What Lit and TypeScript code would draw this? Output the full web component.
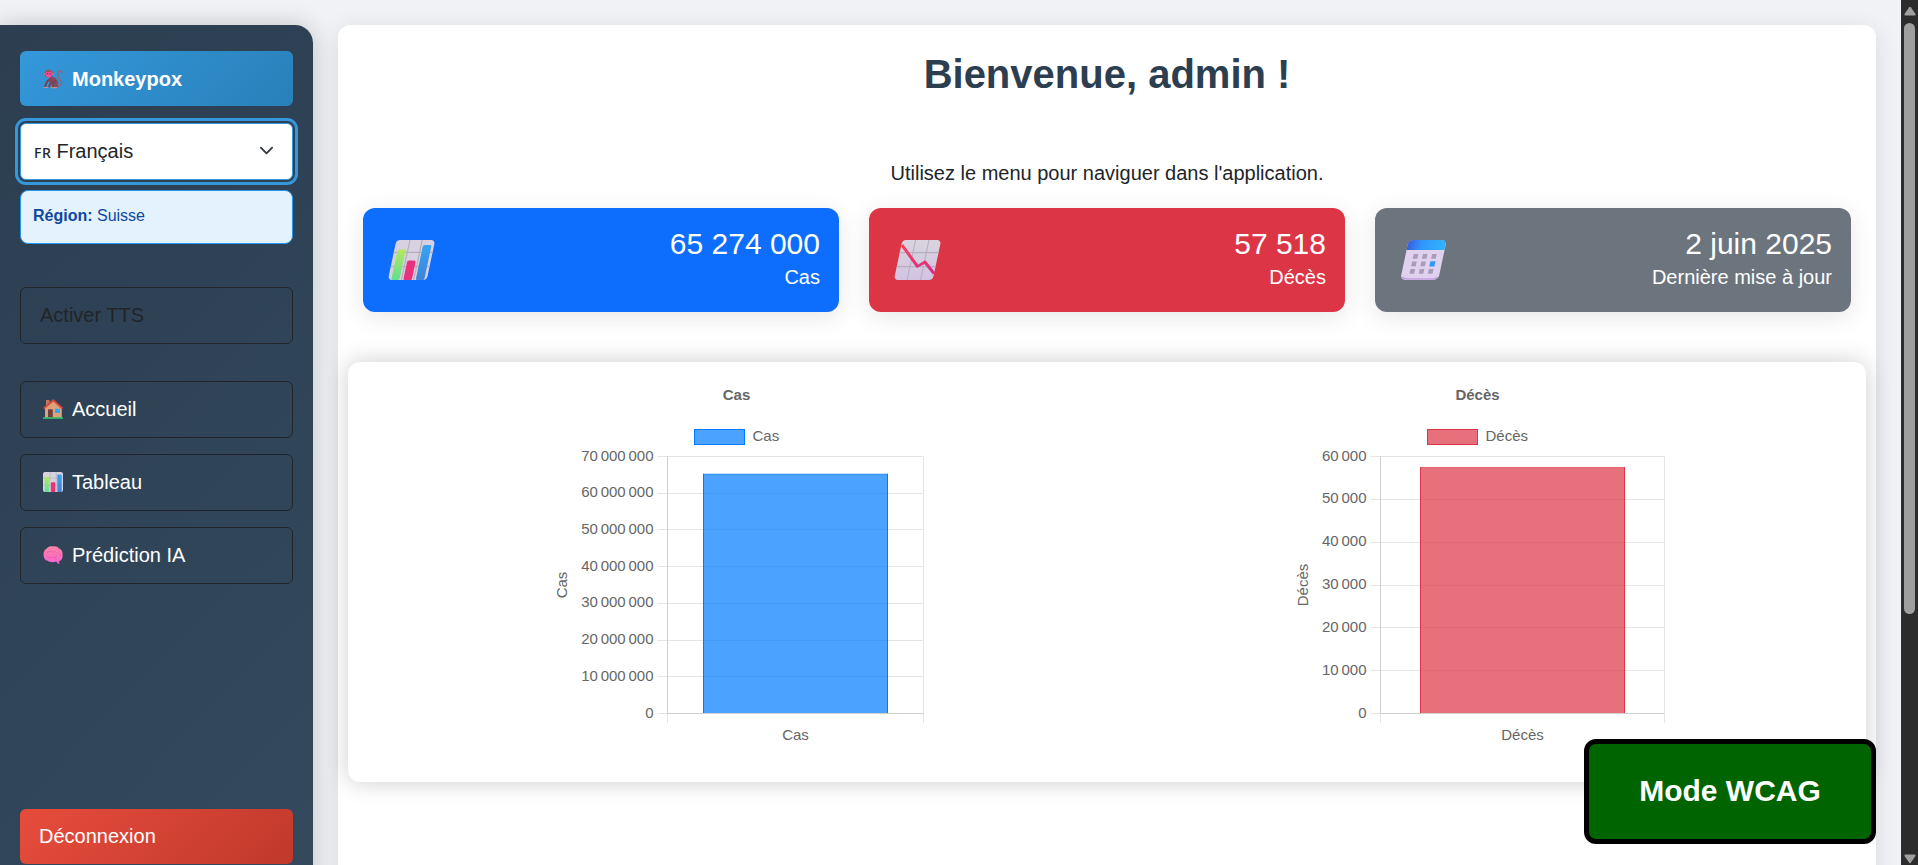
import { LitElement, html, css, svg } from "lit";
import { customElement, property } from "lit/decorators.js";

const monkey = html`<svg class="ico" viewBox="0 0 20 20">
  <path d="M14 17.300c3 .2 5-2 4.500-4.300-.5-2.200-2.800-3.200-3.600-5.600-.8-2.700.6-5.400 2.500-5.400 1.200 0 1.600.9 1.300 1.900" fill="none" stroke="#a0606a" stroke-width="1.400" stroke-linecap="round"/>
  <path d="M6.500 8.500c2-1.500 5-.8 6.800 1.500 1.700 2.200 2.200 4.500 1.700 6.300-.4 1.500-1.500 2.400-3 2.400H9.500c-1-1.500-.8-3 .2-4.200L6 13z" fill="#84495a"/>
  <path d="M7.500 9.500 4.300 12.200 1.800 17.800M9.300 11.500 7.300 15 5.800 18" fill="none" stroke="#7a4052" stroke-width="2" stroke-linejoin="round"/>
  <path d="M13 11.500c-2.500.8-3.700 3.500-3 6" fill="none" stroke="#663648" stroke-width=".8"/>
  <path d="M.9 18.500h4M8.200 18.600h5.500" stroke="#c98a88" stroke-width="1.200" stroke-linecap="round"/>
  <circle cx="5.800" cy="4.600" r="4.200" fill="#9c5458"/>
  <circle cx="1.800" cy="4.800" r="1.100" fill="#c0726a"/><circle cx="9.800" cy="4.800" r="1.100" fill="#c0726a"/>
  <path d="M2.900 4.200c0-1.600 2-1.900 2.900-.9.900-1 2.900-.7 2.900.9 0 2.600-.9 4.500-2.900 4.500s-2.900-1.900-2.900-4.500z" fill="#f04f9c"/>
  <circle cx="4.600" cy="4.600" r=".6" fill="#45213a"/><circle cx="7" cy="4.600" r=".6" fill="#45213a"/>
</svg>`;

const house = html`<svg class="ico" viewBox="0 0 20 20">
  <path d="M3 1h3.500v6H3z" fill="#b97d5d"/>
  <path d="M2 8.500 10.500 2l8.300 7v9.800H2z" fill="#dca27a"/>
  <path d="M.8 9.500 10.200 1.300 19.500 9.500" fill="none" stroke="#e0463c" stroke-width="1.800"/>
  <path d="M5 10.300h4.800v8.500H5z" fill="#6d3f3d"/>
  <path d="M12 9.800h4.800v4.200H12z" fill="#28a8f5"/>
  <path d="M0 18.200h20v1.600H0z" fill="#35c46a"/>
</svg>`;

const bars = svg`
  <rect width="20" height="20" rx="2" fill="#d8d2e0"/>
  <path d="M7 0v20M13.300 0v20M0 6.200h20M0 13.300h20" stroke="#b3adbc" stroke-width=".6"/>
  <rect x="1.700" y="4.700" width="4.200" height="15.300" rx=".8" fill="url(#g)"/>
  <rect x="7.900" y="10.300" width="4.400" height="9.700" rx=".8" fill="#e8327c"/>
  <rect x="14.300" y="2.500" width="4.400" height="17.500" rx=".8" fill="url(#b)"/>`;
const defs = svg`<defs>
  <linearGradient id="g" x2="0" y2="1"><stop stop-color="#b3e85b"/><stop offset="1" stop-color="#5fdf92"/></linearGradient>
  <linearGradient id="b" x2="0" y2="1"><stop stop-color="#35a5f3"/><stop offset="1" stop-color="#3f83d8"/></linearGradient>
  <linearGradient id="p" x2="0" y2="1"><stop stop-color="#d9d4de"/><stop offset="1" stop-color="#d3c3e3"/></linearGradient>
  <linearGradient id="c"><stop stop-color="#3a5be0"/><stop offset=".35" stop-color="#2f95fb"/><stop offset="1" stop-color="#35b4ff"/></linearGradient>
  <linearGradient id="r" x2="0" y2="1"><stop stop-color="#f6435c"/><stop offset="1" stop-color="#dd2a86"/></linearGradient>
</defs>`;
const chartIcon = html`<svg class="ico" viewBox="0 0 20 20">${defs}${bars}</svg>`;

const brain = html`<svg class="ico" viewBox="0 0 20 20">
  <defs><linearGradient id="m" x2="0" y2="1"><stop stop-color="#fb84a6"/><stop offset="1" stop-color="#fb63d6"/></linearGradient></defs>
  <path d="M.6 10C.2 7 1.800 4.300 4 3.300c1.500-1.800 4-2.300 6-1.800 2.300-.5 4.800.2 6 2 2.600 1 3.900 3.600 3.500 6 .6 3.400-.8 5.900-3.400 6.600l.3 2.600c-1 .3-1.900-.2-2.500-1.500l-.6-.7c-2.800.9-6.600 1.100-9-.9C2.200 15.400.5 12.800.6 10z" fill="url(#m)"/>
  <path d="M4 8.200c1.500-2.700 4-2.200 5.200-1 1.500-1 3.800-.8 4.500.5M4.500 11.700c3 1.500 7.500 1.200 9.500-1.200M13.500 15c-1-1-1-1.900-.4-2.900M16.500 8.200c1 .9 1.200 2.300.5 3.300" fill="none" stroke="#e8589a" stroke-width=".7" stroke-linecap="round"/>
</svg>`;

const bigBars = html`<svg class="big" viewBox="0 0 47 40">${defs}<g transform="translate(8.400 0) skewX(-12) scale(1.940 2)">${bars}</g></svg>`;
const bigDown = html`<svg class="big" viewBox="0 0 47 40">${defs}<g transform="translate(8.400 0) skewX(-12) scale(1.940 2)">
  <rect width="20" height="20" rx="2" fill="url(#p)"/>
  <path d="M6.800 0v20M13.700 0v20M0 6.300h20M0 13.300h20" stroke="#b5b0bd" stroke-width=".55"/>
  <path d="M.3 2.500 10.700 13.200 14 11 20 16.800" fill="none" stroke="url(#r)" stroke-width="1.400" stroke-linejoin="round"/></g></svg>`;
const bigCal = html`<svg class="big" viewBox="0 0 47 40">${defs}<g transform="translate(8.700 0) skewX(-12)">
  <rect width="38" height="40" rx="5" fill="#e0d2ee"/>
  <path d="M1.500 37q2 2 5 2h25.500q3 0 5-2" fill="none" stroke="#c3a0df" stroke-width="1.500"/>
  <path d="M0 10V5q0-5 5-5h28q5 0 5 5v5z" fill="url(#c)"/>
  <g fill="#a79db8"><path d="M8 14h4.600v4.800H8zM17.200 14h4.600v4.800h-4.600zM26.400 14h4.600v4.800h-4.600zM8 21.500h4.600v4.800H8zM17.200 21.500h4.600v4.800h-4.600zM8 29h4.600v4.800H8zM17.200 29h4.600v4.800h-4.600zM26.400 29h4.600v4.800h-4.600z"/></g>
  <path d="M26.200 21.200h5.100v5.300h-5.100z" fill="#2e97f8"/></g></svg>`;

@customElement("bar-chart")
export class BarChart extends LitElement {
  @property() label = "";
  @property({ type: Number }) value = 0;
  @property({ type: Number }) max = 1;
  @property({ type: Number }) step = 1;
  @property() color = "#000";
  @property() fill = "#000";
  @property({ type: Array }) box: number[] = [];

  static styles = css`
    :host { display: block; }
    svg { display: block; width: 100%; height: 100%; }
    text { font: 15px "Liberation Sans", Arial, sans-serif; fill: #666; }
    .tick { text-anchor: end; word-spacing: -1.350px; }
    .mid { text-anchor: middle; }
    .bold { font-weight: bold; }
  `;

  render() {
    // box: plot left, plot right, bar left, bar right, title centre, legend left, axis title x
    const [l, r, bl, br, tc, lg, ax] = this.box;
    const top = 86.5, bottom = 343.500;
    const y = (v: number) => bottom - (v / this.max) * (bottom - top);
    const ticks: number[] = [];
    for (let v = 0; v <= this.max; v += this.step) ticks.push(v);
    const by = y(this.value);
    const snap = (n: number) => Math.floor(n) + 0.5;
    return html`<svg viewBox="0 0 420 390">
      <text class="mid bold" x=${tc} y="30">${this.label}</text>
      <rect x=${lg} y="59.500" width="50" height="15" fill=${this.fill} stroke=${this.color}></rect>
      <text x=${lg + 58} y="71">${this.label}</text>
      ${ticks.map((v) => svg`
        <path d="M${l - 10} ${snap(y(v))}H${r}" stroke="#e5e5e5"></path>
        <text class="tick" x=${l - 14} y=${Math.round(y(v)) + 4}>${String(v).replace(/\B(?=(\d{3})+$)/g, " ")}</text>`)}
      <path d="M${r} ${top}V353M${l} ${bottom}V353" stroke="#e5e5e5"></path>
      <path d="M${l} ${top}V${bottom}H${r}" fill="none" stroke="#cfcfcf"></path>
      <rect x=${bl} y=${by} width=${br - bl} height=${bottom - by - 0.5} fill=${this.fill}></rect>
      <path d="M${bl + 0.5} ${bottom - 0.5}V${by}M${br - 0.5} ${bottom - 0.5}V${by}" stroke=${this.color} stroke-width="1"></path>
      <path d="M${bl} ${by + 0.3}H${br}" stroke=${this.color} stroke-opacity=".4"></path>
      <text class="mid" x=${(l + r) / 2} y="370">${this.label}</text>
      <text class="mid" transform="translate(${ax} 215) rotate(-90)">${this.label}</text>
    </svg>`;
  }
}

@customElement("app-root")
export class AppRoot extends LitElement {
  static styles = css`
    :host { display: flex; height: 865px; width: 1918px; overflow: hidden; background: #f0f2f5;
      font: 20px/30px "Liberation Sans", Arial, sans-serif; color: #212529; position: relative; }
    * { box-sizing: border-box; }
    .page { display: flex; flex: 1; min-width: 0; padding: 25px 25px 0 0; gap: 25px; }
    .side { width: 313px; height: 870px; flex: none; padding: 26px 20px 0; border-radius: 0 18px 0 0;
      background: linear-gradient(135deg, #2c3e50, #34495e); box-shadow: 0 0 25px rgba(0,0,0,.2);
      display: flex; flex-direction: column; }
    .brand, .out { height: 55px; border-radius: 6px; color: #fff; display: flex; align-items: center; flex: none; }
    .brand { background: linear-gradient(135deg, #3498db, #2980b9); font-weight: bold; padding-left: 23px; gap: 9px; }
    .out { background: linear-gradient(135deg, #e74c3c, #c0392b); padding: 0 0 1px 19px; margin-top: 225px; }
    .ico { width: 20px; height: 20px; flex: none; display: block; }
    .select { margin-top: 17px; height: 57px; background: #fff; border: 1px solid #3498db; border-radius: 6px;
      outline: 3px solid #3498db; outline-offset: 2px; display: flex; align-items: center; padding: 0 18px 2px 13px; }
    .cc { font: 500 14px/30px "Noto Sans", sans-serif; letter-spacing: .6px; margin-right: 5px; padding-top: 4px; }
    .lang { flex: 1; }
    .chev { width: 15px; height: 15px; }
    .region { margin-top: 10px; height: 54px; border: 1px solid #2196f3; border-radius: 8px; background: #e3f2fd;
      color: #0d47a1; font-size: 16px; padding: 10px 12px; }
    .btn { height: 57px; border: 1px solid #212529; border-radius: 6px; display: flex; align-items: center;
      flex: none; padding-bottom: 2px; }
    .tts { margin-top: 43px; padding-left: 19px; }
    nav { margin-top: 37px; display: flex; flex-direction: column; gap: 16px; }
    nav .btn { color: #fff; padding-left: 22px; gap: 9px; }
    .main { flex: 1; height: 870px; background: #fff; border-radius: 12px 12px 0 0; padding: 20px 10px 0;
      box-shadow: 0 5px 25px rgba(0,0,0,.1); }
    h1 { margin: 5px 0 0; font-size: 40px; line-height: 48px; text-align: center; color: #2c3e50; }
    .intro { margin: 60px 0 20px; text-align: center; }
    .cards { display: grid; grid-template-columns: repeat(3, 1fr); gap: 30px; padding: 0 15px; }
    .card { height: 104px; border-radius: 12px; color: #fff; display: flex; justify-content: space-between;
      padding: 18px 19px 0 25px; box-shadow: 0 5px 25px rgba(0,0,0,.1); text-align: right; }
    .blue { background: #0d6efd; } .red { background: #dc3545; } .grey { background: #6c757d; }
    .big { width: 47px; height: 40px; margin-top: 14px; display: block; }
    .num { font-size: 30px; line-height: 36px; }
    .lab { line-height: 30px; }
    .charts { margin-top: 50px; height: 420px; border-radius: 12px; background: #fff; box-shadow: 0 0 25px rgba(0,0,0,.2);
      display: flex; }
    .c1 { width: 420px; height: 390px; margin-left: 192px; margin-top: 8px; }
    .c2 { width: 420px; height: 390px; margin-left: 310px; margin-top: 8px; }
    .wcag { position: absolute; left: 1584px; top: 739px; width: 292px; height: 105px; background: #006400;
      border: 5px solid #000; border-radius: 12px; color: #fff; font-weight: bold; font-size: 30px;
      display: flex; align-items: center; justify-content: center; padding-bottom: 1px; }
    .bar { width: 17px; background: #2c2c2c; flex: none; display: flex; flex-direction: column; align-items: center; padding-top: 6px; }
    .thumb { width: 11px; height: 591px; border-radius: 6px; background: #9f9f9f; margin-top: 7px; }
    .arrow { width: 14px; height: 10px; display: block; }
    .down { margin: auto 0 1px; transform: rotate(180deg); }
  `;

  render() {
    const arrow = svg`<path d="M6.200 1.200q.8-1 1.600 0L12.500 8q.5 1.500-1 1.500h-9Q1 9.500 1.500 8z" fill="#9f9f9f"/>`;
    return html`
      <div class="page">
        <aside class="side">
          <div class="brand">${monkey}<span>Monkeypox</span></div>
          <div class="select">
            <span class="cc">FR</span><span class="lang">Français</span>
            <svg class="chev" viewBox="0 0 16 16"><path d="m2 5 6 6 6-6" fill="none" stroke="#343a40" stroke-width="2" stroke-linecap="round" stroke-linejoin="round"/></svg>
          </div>
          <div class="region"><b>Région:</b> Suisse</div>
          <div class="btn tts">Activer TTS</div>
          <nav>
            <div class="btn">${house}<span>Accueil</span></div>
            <div class="btn">${chartIcon}<span>Tableau</span></div>
            <div class="btn">${brain}<span>Prédiction IA</span></div>
          </nav>
          <div class="out">Déconnexion</div>
        </aside>
        <main class="main">
          <h1>Bienvenue, admin !</h1>
          <p class="intro">Utilisez le menu pour naviguer dans l'application.</p>
          <div class="cards">
            <div class="card blue">${bigBars}<div><div class="num">65 274 000</div><div class="lab">Cas</div></div></div>
            <div class="card red">${bigDown}<div><div class="num">57 518</div><div class="lab">Décès</div></div></div>
            <div class="card grey">${bigCal}<div><div class="num">2 juin 2025</div><div class="lab">Dernière mise à jour</div></div></div>
          </div>
          <section class="charts">
            <bar-chart class="c1" label="Cas" .value=${65274000} .max=${70000000} .step=${10000000}
              color="#007bff" fill="rgba(0,123,255,.7)" .box=${[127.5, 383.5, 163, 348, 196.5, 154.5, 27]}></bar-chart>
            <bar-chart class="c2" label="Décès" .value=${57518} .max=${60000} .step=${10000}
              color="#dc3545" fill="rgba(220,53,69,.7)" .box=${[110.5, 394.5, 150, 355, 207.5, 157.5, 38]}></bar-chart>
          </section>
        </main>
      </div>
      <div class="bar">
        <svg class="arrow" viewBox="0 0 14 10">${arrow}</svg>
        <div class="thumb"></div>
        <svg class="arrow down" viewBox="0 0 14 10">${arrow}</svg>
      </div>
      <div class="wcag">Mode WCAG</div>
    `;
  }
}
